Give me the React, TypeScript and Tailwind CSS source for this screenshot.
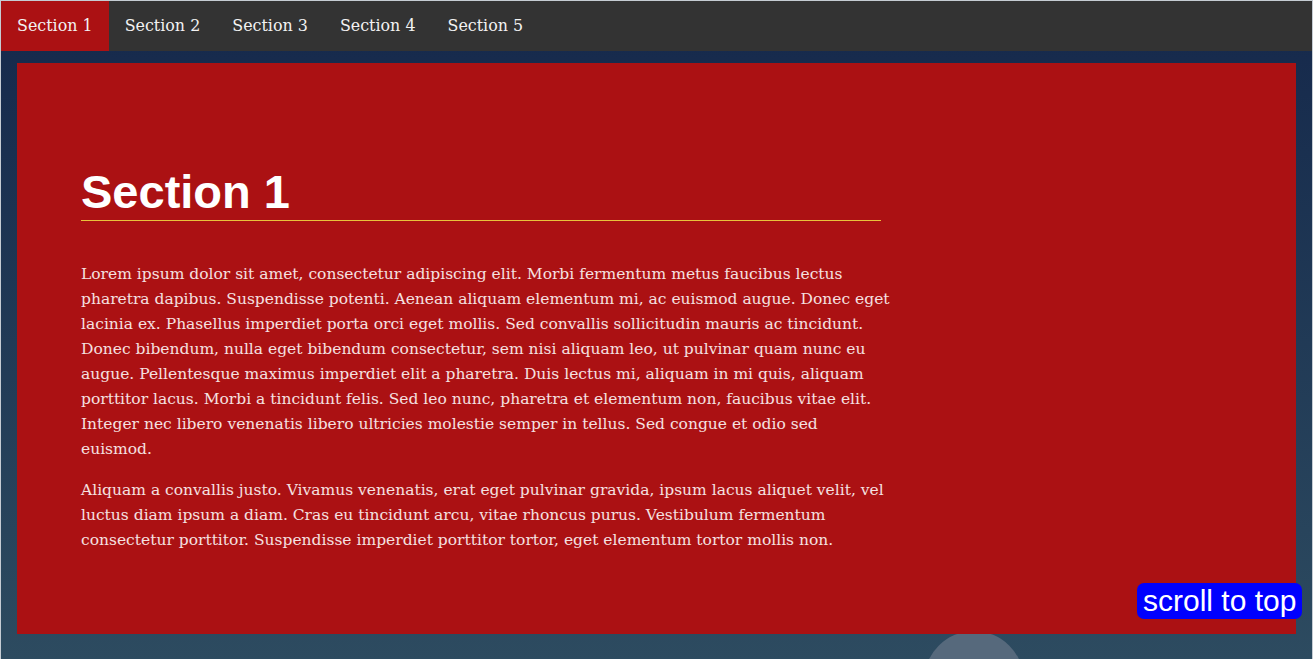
import React from "react";

const sections = ["Section 1", "Section 2", "Section 3", "Section 4", "Section 5"];

// Lines broken as in the reference layout
const paragraphs: string[][] = [
  [
    "Lorem ipsum dolor sit amet, consectetur adipiscing elit. Morbi fermentum metus faucibus lectus",
    "pharetra dapibus. Suspendisse potenti. Aenean aliquam elementum mi, ac euismod augue. Donec eget",
    "lacinia ex. Phasellus imperdiet porta orci eget mollis. Sed convallis sollicitudin mauris ac tincidunt.",
    "Donec bibendum, nulla eget bibendum consectetur, sem nisi aliquam leo, ut pulvinar quam nunc eu",
    "augue. Pellentesque maximus imperdiet elit a pharetra. Duis lectus mi, aliquam in mi quis, aliquam",
    "porttitor lacus. Morbi a tincidunt felis. Sed leo nunc, pharetra et elementum non, faucibus vitae elit.",
    "Integer nec libero venenatis libero ultricies molestie semper in tellus. Sed congue et odio sed",
    "euismod.",
  ],
  [
    "Aliquam a convallis justo. Vivamus venenatis, erat eget pulvinar gravida, ipsum lacus aliquet velit, vel",
    "luctus diam ipsum a diam. Cras eu tincidunt arcu, vitae rhoncus purus. Vestibulum fermentum",
    "consectetur porttitor. Suspendisse imperdiet porttitor tortor, eget elementum tortor mollis non.",
  ],
];

export default function App() {
  return (
    <div className="relative h-[659px] overflow-hidden border-t border-x border-[#c5ccd3] bg-gradient-to-b from-[#15284b] to-[#2d4b60] font-['DejaVu_Serif',serif]">
      {/* Top navigation */}
      <nav className="flex h-[50px] bg-[#333333] text-[15.9px] text-[#f2f2f2]">
        {sections.map((s, i) => (
          <a
            key={s}
            className={`flex items-center px-4 ${i === 0 ? "bg-[#ab1113]" : ""}`}
          >
            {s}
          </a>
        ))}
      </nav>

      {/* Decorative circle behind the panel */}
      <div className="absolute left-[923px] top-[630px] h-[100px] w-[100px] rounded-full bg-[#56697c]"></div>

      <div className="relative px-4 pt-3">
        <section className="h-[571px] bg-[#ab1113] px-16 pt-[101px]">
          <div className="w-[800px]">
            <h1 className="border-b border-[#e9c23c] pb-[1px] font-['Liberation_Sans',Arial,sans-serif] text-[47px] font-bold leading-[55px] text-white">
              Section 1
            </h1>
            <div className="mt-[41px] space-y-4 text-[15.5px] leading-[25px] text-[#f5e0e0]">
              {paragraphs.map((lines, i) => (
                <p key={i}>
                  {lines.map((l, j) => (
                    <span key={j} className="block whitespace-nowrap">
                      {l}
                    </span>
                  ))}
                </p>
              ))}
            </div>
          </div>
        </section>
      </div>

      {/* Scroll to top button */}
      <button className="absolute left-[1136px] top-[582px] rounded-[7px] bg-[#0000ff] px-[6px] font-['Liberation_Sans',Arial,sans-serif] text-[30px] leading-[36px] text-white">
        scroll to top
      </button>
    </div>
  );
}
